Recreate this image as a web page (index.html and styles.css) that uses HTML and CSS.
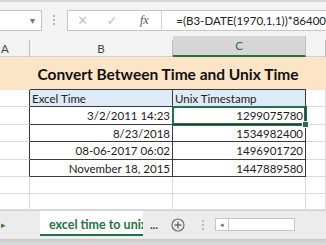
FILE: index.html
```html
<!doctype html>
<html lang=en >
<head>
<meta charset=utf-8 >
<title>Excel time to Unix</title>
<link rel="stylesheet" href="styles.css">
</head>
<body>

	<div id=app >

		<div id=formulaBar >
			<div class=nameBox ><span class=caret >&#9662;</span></div>
			<div class=grip ><i></i><i></i><i></i></div>
			<div class=formulaBox >
				<span class="fbIcon cancel" >&#10005;</span>
				<span class="fbIcon enter" >&#10003;</span>
				<span class="fbIcon fx" >fx</span>
				<div class=formula >=(B3-DATE(1970,1,1))*86400</div>
			</div>
		</div>

		<div id=colHeads >
			<div class=colA >A</div>
			<div>B</div>
			<div class=sel >C</div>
			<div></div>
		</div>

		<div id=sheet >

			<div class=fill ></div>
			<div class="fill title" >Convert Between Time and Unix Time</div>
			<div class=fill ></div>

			<div class="c edge" ></div>
			<div class="c t th" >Excel Time</div>
			<div class="c t th" >Unix Timestamp</div>
			<div class=c ></div>

			<div class="c edge" ></div>
			<div class="c t num" >3/2/2011 14:23</div>
			<div class="c t num active" >1299075780</div>
			<div class=c ></div>

			<div class="c edge" ></div>
			<div class="c t num" >8/23/2018</div>
			<div class="c t num" >1534982400</div>
			<div class=c ></div>

			<div class="c edge" ></div>
			<div class="c t num" >08-06-2017 06:02</div>
			<div class="c t num" >1496901720</div>
			<div class=c ></div>

			<div class="c edge" ></div>
			<div class="c t num" >November 18, 2015</div>
			<div class="c t num" >1447889580</div>
			<div class=c ></div>

			<div class=c ></div><div class=c ></div><div class=c ></div><div class=c ></div>
			<div class=c ></div><div class=c ></div><div class=c ></div><div class=c ></div>

		</div>

		<div id=tabBar >
			<div class=tabNav >&#9656;</div>
			<div class=tab >excel time to unix</div>
			<div class=more >...</div>
			<div class=addSheet >
				<svg width=14 height=14 viewBox="0 0 14 14" ><circle cx=7 cy=7 r=6 fill=none stroke="#6d6d6d" stroke-width=1.2 /><path d="M7 3.5v7M3.5 7h7" stroke="#6d6d6d" stroke-width=1.4 /></svg>
			</div>
			<div class=grip ><i></i><i></i><i></i></div>
			<div class=hScroll >
				<span class=arrow >&#9666;</span>
			</div>
		</div>

		<div id=bottomEdge ></div>

	</div>

</body>
</html>
```

FILE: styles.css
```css
html, body { margin: 0; height: 100%; overflow: hidden; background: #fff; }
body { font: 11.5px Lato, "Liberation Sans", sans-serif; color: #222; }

#app { width: 326px; height: 245px; display: flex; flex-direction: column; }

/* formula bar */
#formulaBar { height: 36px; box-sizing: border-box; border-top: 2px solid #d6d6d6; background: #f3f3f3; display: flex; align-items: center; padding-top: 2px; }
.nameBox { width: 44px; height: 21px; box-sizing: border-box; background: #fff; border: 1px solid #c6c6c6; border-left: 0; position: relative; }
.caret { position: absolute; right: 6px; top: 3px; color: #777; font-size: 10px; }

.grip { width: 27px; display: flex; flex-direction: column; align-items: center; gap: 2px; }
.grip i { width: 2px; height: 2px; background: #b9b9b9; }

.formulaBox { flex: 1; height: 21px; box-sizing: border-box; background: #fff; border: 1px solid #c6c6c6; border-right: 0; display: flex; align-items: center; }
.fbIcon { color: #c2c2c2; font-family: "DejaVu Sans", sans-serif; font-size: 13px; text-align: center; }
.cancel { width: 29px; }
.enter { width: 30px; }
.fx { width: 34px; font: italic 12px "Liberation Serif", serif; color: #555; }
.formula { flex: 1; height: 100%; border-left: 1px solid #d6d6d6; padding-left: 14px; line-height: 19px; font-size: 11.5px; color: #222; white-space: nowrap; overflow: hidden; }

/* column headers */
#colHeads { height: 21px; box-sizing: border-box; background: #f3f3f3; border-bottom: 1px solid #d0d0d0; display: grid; grid-template-columns: 30px 143px 133px 20px; }
#colHeads div { border-right: 1px solid #bdbdbd; text-align: center; color: #444; font-size: 11.5px; margin: 4px 0 0; line-height: 16px; padding-top: 1px; }
#colHeads .colA { text-align: left; padding-left: 1px; }
#colHeads .sel { background: #d6d6d6; color: #217346; border-bottom: 2px solid #217346; margin-top: 0; line-height: 18px; padding-top: 1px; }

/* sheet grid */
#sheet { display: grid; grid-template-columns: 30px 143px 133px 20px; grid-template-rows: 33px 17px 18px 17px 18px 17px 17px 16px; }
.fill { background: #fce4c6; }
.title { grid-column: 2 / 4; border-bottom: 1px solid #3a3a3a; text-align: center; font-weight: bold; font-size: 15.5px; line-height: 34px; color: #111; }

.c { box-sizing: border-box; border-right: 1px solid #dadada; border-bottom: 1px solid #dadada; padding: 0 2px; line-height: 17px; white-space: nowrap; overflow: hidden; }
.c.edge { border-right-color: #3a3a3a; }
.c.t { border-right-color: #3a3a3a; border-bottom-color: #3a3a3a; }
.c.th { background: #ddebf7; }
.c.num { text-align: right; }
.c.active { position: relative; overflow: visible; box-shadow: inset 0 0 0 1px #217346, 0 0 0 1px #217346; }
.c.active::after { content: ""; position: absolute; right: -4px; bottom: -4px; width: 5px; height: 5px; background: #217346; border: 1px solid #fff; }

/* sheet tabs */
#tabBar { height: 28px; background: #ececec; border-top: 1px solid #d4d4d4; display: flex; align-items: stretch; }
.tabNav { width: 40px; color: #3b6e4f; font-size: 9px; line-height: 28px; padding-left: 1px; box-sizing: border-box; }
.tab { width: 103px; background: #fff; border-bottom: 2px solid #217346; box-sizing: border-box; margin-bottom: 3px; color: #217346; font-weight: bold; font-size: 12.5px; line-height: 27px; padding-left: 9px; white-space: nowrap; overflow: hidden; }
.more { width: 22px; text-align: center; color: #444; line-height: 28px; font-weight: bold; }
.addSheet { width: 26px; display: flex; align-items: center; justify-content: center; }
#tabBar .grip { width: 24px; justify-content: center; }
.hScroll { width: 80px; height: 13px; margin-top: 7px; box-sizing: border-box; background: #fff; border: 1px solid #c6c6c6; }
.hScroll .arrow { display: block; width: 12px; height: 100%; border-right: 1px solid #c6c6c6; font-size: 7px; color: #666; line-height: 11px; text-align: center; }

#bottomEdge { flex: 1; background: linear-gradient( #c8c8c8, #dedede ); }
```
